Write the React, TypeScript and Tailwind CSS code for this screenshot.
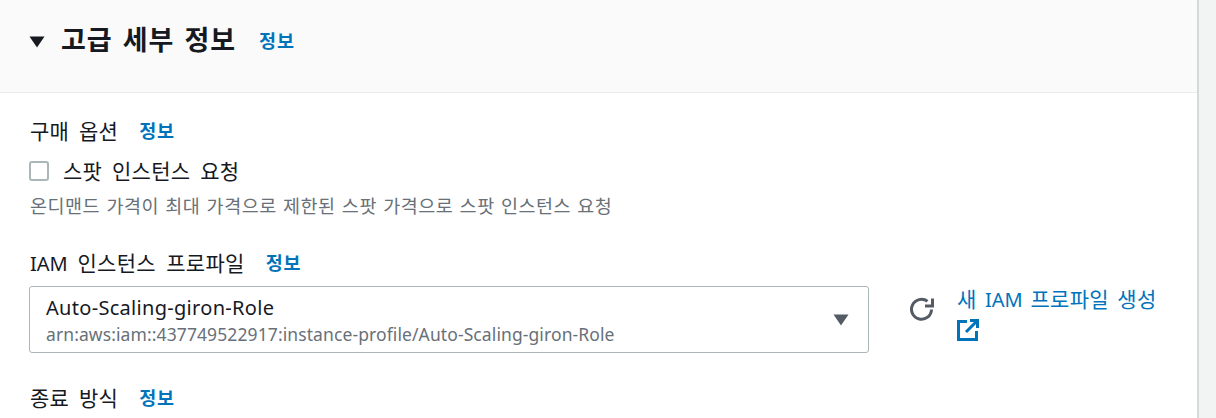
import React from "react";

function Info() {
  return <span className="text-[18.5px] leading-[22px] font-bold tracking-[0.8px] text-[#0073bb] ml-[21px]">정보</span>;
}

function Caret({ color, className }: { color: string; className: string }) {
  return (
    <svg viewBox="0 0 16 12" className={className} fill={color}>
      <path d="M0.5 0.5H15.5L8 11.5Z" />
    </svg>
  );
}

const body = "text-[21px] leading-[28px] tracking-[0.3px] [word-spacing:4px]";

export default function App() {
  return (
    <div className="w-[1216px] h-[418px] overflow-hidden bg-[#f2f3f3] text-[#16191f] font-['Noto_Sans','Noto_Sans_CJK_KR',sans-serif]">
      <div className="w-[1199px] h-[418px] bg-white border-r-2 border-[#d5dbdb] overflow-hidden">
        <div className="h-[93px] bg-[#fafafa] border-b border-[#eaeded] pl-[29px] pt-[22px] flex items-start">
          <Caret color="#16191f" className="w-[16px] h-[12px] mt-[14px] mr-[16px]" />
          <span className="text-[27px] leading-[36px] font-bold tracking-[1px] [word-spacing:2px]">고급 세부 정보</span>
          <span className="text-[18.5px] leading-[22px] font-bold tracking-[0.8px] text-[#0073bb] ml-[23px] mt-[8px]">정보</span>
        </div>
        <div className="pl-[29px] pt-[24px] flex flex-col">
          <div className="flex items-center h-[28px] pl-[1px]">
            <span className={body}>구매 옵션</span>
            <Info />
          </div>
          <div className="flex items-center mt-[12px] h-[28px]">
            <span className="w-[20px] h-[20px] border-2 border-[#aab7b8] rounded-[3px] bg-white" />
            <span className={`${body} ml-[14px]`}>스팟 인스턴스 요청</span>
          </div>
          <div className="text-[18.5px] leading-[24px] tracking-[0.5px] [word-spacing:1px] text-[#687078] mt-[9px] pl-[1px]">
            온디맨드 가격이 최대 가격으로 제한된 스팟 가격으로 스팟 인스턴스 요청
          </div>
          <div className="flex items-center h-[28px] mt-[31px] pl-[1px]">
            <span className="text-[21px] leading-[28px] tracking-[0.3px] [word-spacing:4.5px]"><span className="text-[20px] tracking-normal">IAM </span>인스턴스 프로파일</span>
            <Info />
          </div>
          <div className="flex items-start mt-[9px]">
            <div className="w-[840px] h-[67px] border border-[#aab7b8] rounded-[3px] pl-[16px] pr-[19px] pt-[7px] flex items-start justify-between">
              <div className="flex flex-col">
                <span className="text-[20px] leading-[28px] tracking-[0.3px]">Auto-Scaling-giron-Role</span>
                <span className="text-[17.5px] leading-[25px] tracking-[0.1px] text-[#687078]">
                  arn:aws:iam::437749522917:instance-profile/Auto-Scaling-giron-Role
                </span>
              </div>
              <Caret color="#545b64" className="w-[16px] h-[12px] mt-[20px]" />
            </div>
            <svg viewBox="0 0 26 26" className="w-[26px] h-[26px] ml-[40px] mt-[10px]" fill="none" stroke="#545b64" strokeWidth="3">
              <path d="M22.5 13.5a10 10 0 1 1-4-8.2" />
              <path d="M23.5 2.5v7.5h-7.5" strokeWidth="3" />
            </svg>
            <div className="ml-[22px] w-[210px]">
              <div className="text-[21px] leading-[28px] tracking-[0.3px] [word-spacing:2.6px] text-[#0073bb] -mt-[1px] whitespace-nowrap">새 <span className="text-[20px] tracking-normal">IAM </span>프로파일 생성</div>
              <svg viewBox="0 0 22 22" className="w-[22px] h-[22px] mt-[5px]" fill="none" stroke="#0073bb" strokeWidth="3">
                <path d="M10 2.5H1.5V20.5H19.5V12" />
                <path d="M13 1.5H20.5V9" />
                <path d="M20 2L9 13" />
              </svg>
            </div>
          </div>
          <div className="flex items-center h-[28px] mt-[31px] pl-[1px]">
            <span className={body}>종료 방식</span>
            <Info />
          </div>
        </div>
      </div>
    </div>
  );
}
